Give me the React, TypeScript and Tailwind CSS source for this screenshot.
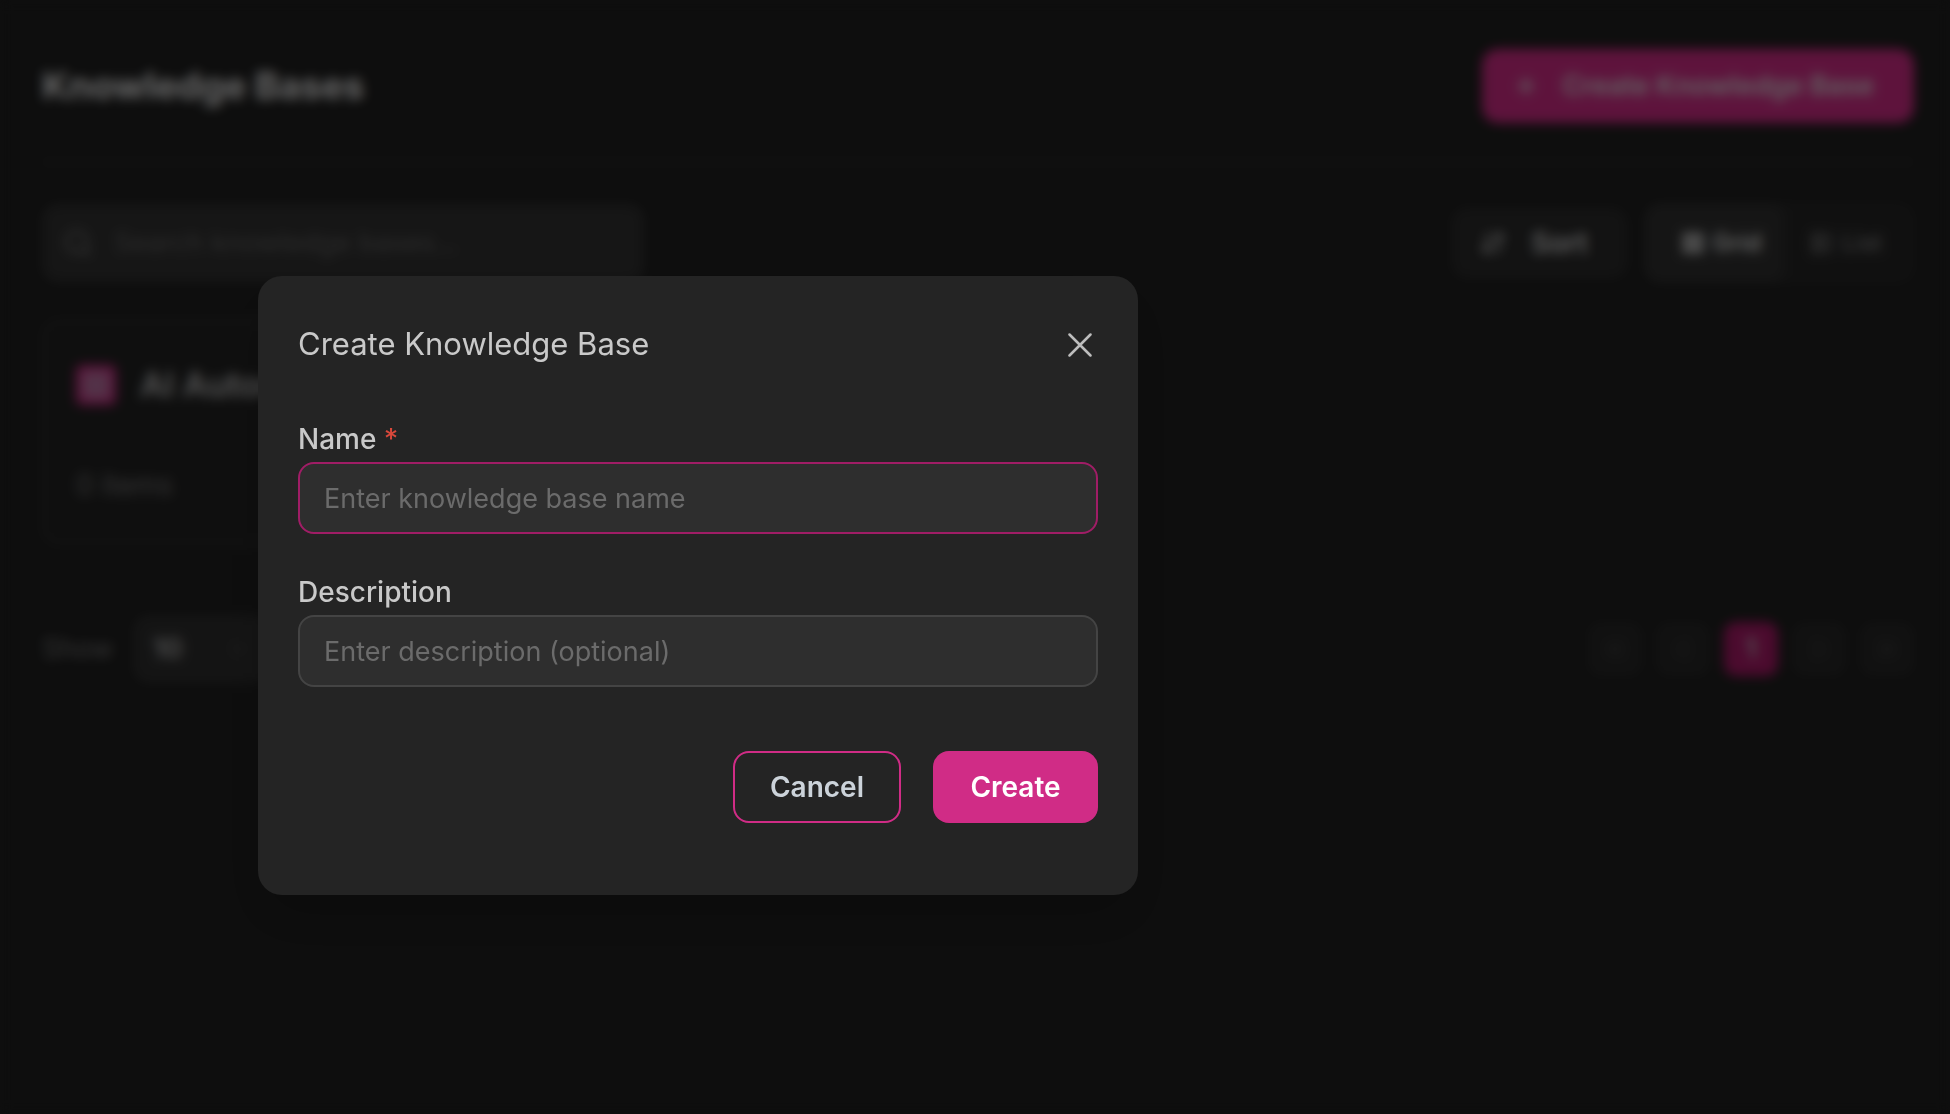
import { useState } from "react";
import {
  ArrowDownUp,
  ChevronDown,
  ChevronLeft,
  ChevronRight,
  ChevronsLeft,
  ChevronsRight,
  LayoutGrid,
  LayoutList,
  Plus,
  Search,
} from "lucide-react";

const knowledgeBases = [{ id: 1, name: "AI Automation", items: 0 }];

const pageButton =
  "flex h-[54px] w-[54px] items-center justify-center rounded-xl border-2 border-[#2a2a2a] bg-[#272727] text-[#4c4c4c]";

function KnowledgeBasesPage() {
  return (
    <main className="pt-[49px] pr-9 pl-[42px]">
      <header className="flex items-center justify-between border-b-2 border-[#404040] pb-[38px]">
        <h1 className="text-[37px] leading-10 font-bold text-[#e4e4e4]">Knowledge Bases</h1>
        <button type="button" className="flex h-[74px] items-center gap-6 rounded-2xl bg-[#d02c86] pr-10 pl-8 text-[27px] font-semibold text-[#dcdcdc]">
          <Plus className="h-6 w-6" strokeWidth={3} />
          Create Knowledge Base
        </button>
      </header>

      {/* Toolbar */}
      <div className="flex items-center justify-between pt-10">
        <label className="flex h-[78px] w-[602px] items-center gap-5 rounded-2xl bg-[#313131] px-5 text-[#747474]">
          <Search className="h-8 w-8" />
          <input
            type="text"
            aria-label="Search knowledge bases"
            placeholder="Search knowledge bases..."
            className="min-w-0 flex-1 bg-transparent text-[27px] outline-none placeholder:text-[#626262]"
          />
        </label>

        <div className="flex items-center gap-4">
          <button type="button" className="flex h-[72px] items-center gap-6 rounded-2xl bg-[#2a2a2a] pr-10 pl-7 text-[28px] font-semibold text-[#d4d4d4]">
            <ArrowDownUp className="h-7 w-7" />
            Sort
          </button>
          <div className="flex h-20 items-center rounded-2xl border-2 border-[#2d2d2d] bg-[#252525] pr-1">
            <button type="button" className="flex h-full w-[138px] items-center justify-center gap-2 rounded-xl bg-[#303030] pl-3 text-2xl font-semibold text-[#e0e0e0]">
              <LayoutGrid className="h-6 w-6 fill-current" />
              Grid
            </button>
            <button type="button" className="flex h-full w-[124px] items-center justify-center gap-2 text-2xl text-[#909090]">
              <LayoutList className="h-6 w-6" />
              List
            </button>
          </div>
        </div>
      </div>

      {/* Cards */}
      <div className="grid grid-cols-3 gap-8 pt-9">
        {knowledgeBases.map((kb) => (
          <article key={kb.id} className="h-[226px] rounded-2xl border-2 border-[#383838] bg-[#222222] px-8 pt-10">
            <div className="flex items-center gap-6">
              <span className="flex h-10 w-10 items-center justify-center rounded-md bg-[#c7287f]">
                <span className="h-7 w-7 rounded-sm bg-[#b86f9f]" />
              </span>
              <h2 className="text-[34px] leading-12 font-semibold text-[#bcbcbc]">{kb.name}</h2>
            </div>
            <p className="pt-14 text-[28px] leading-10 text-[#747474]">{kb.items} items</p>
          </article>
        ))}
      </div>

      {/* Paging */}
      <footer className="flex items-center justify-between pt-[70px]">
        <div className="flex items-center gap-5 text-[27px] text-[#747474]">
          <label htmlFor="page-size">Show</label>
          <span className="flex h-[68px] items-center rounded-2xl bg-[#2e2e2e] pr-5">
            <select id="page-size" defaultValue="10" className="w-24 appearance-none bg-transparent pl-5 text-[27px] font-semibold text-[#b4b4b4]">
              <option value="10">10</option>
            </select>
            <ChevronDown className="h-5 w-5 text-[#555555]" />
          </span>
        </div>
        <nav className="flex gap-[14px]" aria-label="Pagination">
          <button type="button" aria-label="First page" className={pageButton}>
            <ChevronsLeft className="h-6 w-6" />
          </button>
          <button type="button" aria-label="Previous page" className={pageButton}>
            <ChevronLeft className="h-6 w-6" />
          </button>
          <button type="button" className="flex h-[54px] w-[54px] items-center justify-center rounded-xl bg-[#a81967] text-[27px] font-semibold text-[#c0c0c0]">
            1
          </button>
          <button type="button" aria-label="Next page" className={pageButton}>
            <ChevronRight className="h-6 w-6" />
          </button>
          <button type="button" aria-label="Last page" className={pageButton}>
            <ChevronsRight className="h-6 w-6" />
          </button>
        </nav>
      </footer>
    </main>
  );
}

function CreateDialog() {
  const [name, setName] = useState("");
  const [description, setDescription] = useState("");

  return (
    <div className="fixed inset-0 bg-black/55 backdrop-blur-[6px]">
      <form
        role="dialog"
        aria-labelledby="dialog-title"
        onSubmit={(e) => e.preventDefault()}
        className="absolute top-[276px] left-[258px] w-[880px] rounded-3xl bg-[#242424] px-10 pt-10 pb-18 text-[#c9c9c9] shadow-2xl shadow-black/20"
      >
        <div className="flex h-[57px] items-center justify-between">
          <h2 id="dialog-title" className="text-[31px]">Create Knowledge Base</h2>
          <button type="button" aria-label="Close" className="flex h-9 w-9 items-center justify-center">
            <svg viewBox="0 0 24 24" className="h-6 w-6" fill="none" stroke="#bdbdbd" strokeWidth="2.5" strokeLinecap="round">
              <path d="M1.5 1.5 22.5 22.5M22.5 1.5 1.5 22.5" />
            </svg>
          </button>
        </div>

        <div className="pt-12">
          <label htmlFor="kb-name" className="mb-[5px] block text-[28px] leading-9 font-medium">
            Name <span className="text-[#d9483b]">*</span>
          </label>
          <input
            id="kb-name"
            type="text"
            value={name}
            onChange={(e) => setName(e.target.value)}
            placeholder="Enter knowledge base name"
            className="block h-18 w-full rounded-2xl border-2 border-[#a01d66] bg-[#2e2e2e] px-6 text-[27px] outline-none placeholder:text-[#6b6b6b]"
          />
        </div>

        <div className="pt-10">
          <label htmlFor="kb-description" className="mb-[5px] block text-[28px] leading-9 font-medium">
            Description
          </label>
          <input
            id="kb-description"
            type="text"
            value={description}
            onChange={(e) => setDescription(e.target.value)}
            placeholder="Enter description (optional)"
            className="block h-18 w-full rounded-2xl border-2 border-[#444444] bg-[#2e2e2e] px-6 text-[27px] outline-none placeholder:text-[#6b6b6b]"
          />
        </div>

        <div className="flex justify-end gap-8 pt-16">
          <button type="button" className="h-18 w-[168px] rounded-2xl border-2 border-[#d02c86] text-[28px] font-semibold text-[#ccd3da]">
            Cancel
          </button>
          <button type="submit" className="h-18 w-[165px] rounded-2xl bg-[#d02c86] text-[28px] font-semibold text-white">
            Create
          </button>
        </div>
      </form>
    </div>
  );
}

export default function App() {
  return (
    <div className="min-h-screen bg-[#1f1f1f] font-[Inter,'Liberation_Sans',sans-serif]">
      <KnowledgeBasesPage />
      <CreateDialog />
    </div>
  );
}
